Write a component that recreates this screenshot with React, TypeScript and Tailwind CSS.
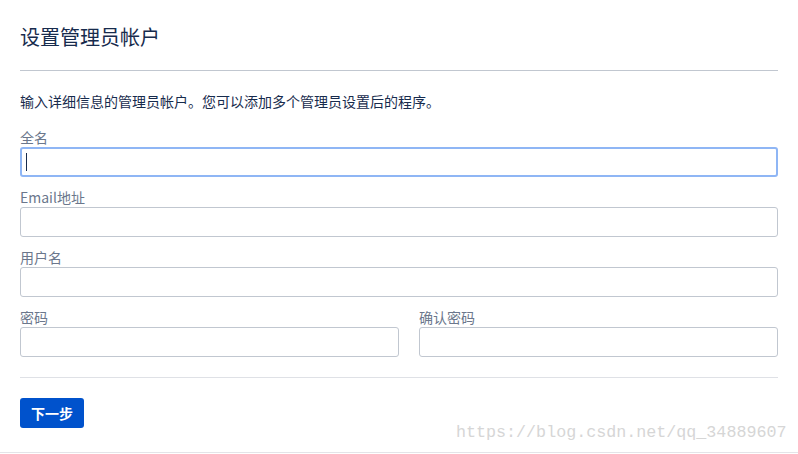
import React from "react";

const cjk = "font-['Microsoft_YaHei','Noto_Sans_CJK_SC',sans-serif]";

type TypeField = {
  label: string;
  focused?: boolean;
  type?: string;
};

const Field = ({ label, focused, type = "text" }: TypeField) => {
  return (
    <div className="flex flex-col">
      <label className="h-5 text-[14px] leading-5 text-[#6b778c]">{label}</label>
      <div className="relative">
        <input
          type={type}
          className={
            focused
              ? "block w-full h-[30px] rounded-[3px] border-2 border-[#8fb6f5] bg-white outline-none"
              : "block w-full h-[30px] rounded-[3px] border border-[#c1c7d0] bg-white outline-none"
          }
        />
        {focused ? (
          <span className="absolute left-[6px] top-[6px] w-px h-[18px] bg-[#172b4d]" />
        ) : null}
      </div>
    </div>
  );
};

const App = () => {
  return (
    <div className={`relative w-[798px] h-[453px] bg-white border-b border-[#e4e4e8] ${cjk}`}>
      <div className="px-5 pt-[23px] flex flex-col">
        <h1 className="text-[20px] leading-[28px] text-[#172b4d] font-normal">设置管理员帐户</h1>
        <div className="mt-[19px] h-px bg-[#c1c7d0]" />
        <p className="mt-[20px] text-[14px] leading-5 text-[#172b4d]">
          输入详细信息的管理员帐户。您可以添加多个管理员设置后的程序。
        </p>
        <div className="mt-[16px] flex flex-col gap-[10px]">
          <Field label="全名" focused />
          <Field label="Email地址" />
          <Field label="用户名" />
          <div className="flex flex-row gap-5">
            <div className="w-[379px]">
              <Field label="密码" type="password" />
            </div>
            <div className="flex-1">
              <Field label="确认密码" type="password" />
            </div>
          </div>
        </div>
        <div className="mt-5 h-px bg-[#dfe1e6]" />
        <div className="mt-5">
          <button className="h-[30px] px-[11px] rounded-[3px] bg-[#0052cc] text-white text-[14px] font-bold leading-[30px]">
            下一步
          </button>
        </div>
      </div>
      <span className="absolute left-[456px] bottom-[9px] text-[16.7px] leading-5 text-[#d6d6d6] font-['Liberation_Mono',monospace]">
        https://blog.csdn.net/qq_34889607
      </span>
    </div>
  );
};

export default App;
